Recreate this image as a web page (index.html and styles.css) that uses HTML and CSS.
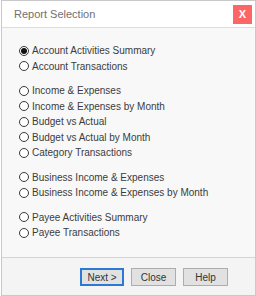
FILE: index.html
```html
<!DOCTYPE html>
<html lang="en">
  <head>
    <meta charset="UTF-8" />
    <meta name="viewport" content="width=device-width, initial-scale=1.0" />
    <title>Report Selection</title>
    <link rel="stylesheet" href="styles.css">
  </head>
  <body>
    <main class="dialog">
      <header class="titlebar">
        <h1>Report Selection</h1>
        <button class="luk">X</button>
      </header>

      <section class="indhold">
        <div class="gruppe">
          <label class="valg"><input type="radio" name="rapport" checked /> Account Activities Summary</label>
          <label class="valg"><input type="radio" name="rapport" /> Account Transactions</label>
        </div>
        <div class="gruppe">
          <label class="valg"><input type="radio" name="rapport" /> Income &amp; Expenses</label>
          <label class="valg"><input type="radio" name="rapport" /> Income &amp; Expenses by Month</label>
          <label class="valg"><input type="radio" name="rapport" /> Budget vs Actual</label>
          <label class="valg"><input type="radio" name="rapport" /> Budget vs Actual by Month</label>
          <label class="valg"><input type="radio" name="rapport" /> Category Transactions</label>
        </div>
        <div class="gruppe">
          <label class="valg"><input type="radio" name="rapport" /> Business Income &amp; Expenses</label>
          <label class="valg"><input type="radio" name="rapport" /> Business Income &amp; Expenses by Month</label>
        </div>
        <div class="gruppe">
          <label class="valg"><input type="radio" name="rapport" /> Payee Activities Summary</label>
          <label class="valg"><input type="radio" name="rapport" /> Payee Transactions</label>
        </div>
      </section>

      <footer class="knapper">
        <button class="knap fokus">Next &gt;</button>
        <button class="knap">Close</button>
        <button class="knap">Help</button>
      </footer>
    </main>
  </body>
</html>
```

FILE: styles.css
```css
body {
  margin: 0;
  background-color: white;
  font-family: "Liberation Sans", Arial, sans-serif;
}

.dialog {
  box-sizing: border-box;
  width: 255px;
  height: 296px;
  margin-left: 1px;
  border: 1px solid #c9c9c9;
  display: flex;
  flex-direction: column;
}

.titlebar {
  height: 26px;
  border-bottom: 1px solid #dcdcdc;
  background-color: white;
  display: flex;
  align-items: center;
  justify-content: space-between;
  padding: 0 3px 0 12px;
}

.titlebar h1 {
  margin: 0;
  font-size: 11px;
  font-weight: normal;
  color: #707070;
}

.luk {
  width: 19px;
  height: 19px;
  border: none;
  padding: 0;
  background-color: #fe6666;
  color: white;
  font-family: "Liberation Sans", Arial, sans-serif;
  font-size: 11px;
  font-weight: bold;
}

.indhold {
  flex: 1;
  background-color: #f8f8f8;
  padding: 15px 0 0 17px;
  display: flex;
  flex-direction: column;
  gap: 9px;
}

.gruppe {
  display: flex;
  flex-direction: column;
}

.valg {
  height: 15.5px;
  display: flex;
  align-items: center;
  font-size: 10px;
  color: #3c3c3c;
}

.valg input {
  appearance: none;
  box-sizing: border-box;
  width: 10px;
  height: 10px;
  margin: 0 3px 0 0;
  border: 1px solid #3a3a3a;
  border-radius: 50%;
  background-color: white;
  display: grid;
  place-content: center;
}

.valg input:checked::before {
  content: "";
  width: 6px;
  height: 6px;
  border-radius: 50%;
  background-color: #111;
}

.knapper {
  height: 38px;
  border-top: 1px solid #d4d4d4;
  background-color: #f4f4f4;
  display: flex;
  justify-content: flex-end;
  gap: 7px;
  padding: 10px 27px 0 0;
  box-sizing: border-box;
}

.knap {
  box-sizing: border-box;
  width: 45px;
  height: 18px;
  padding: 0;
  border: 1px solid #adadad;
  background-color: #e1e1e1;
  font-family: "Liberation Sans", Arial, sans-serif;
  font-size: 10px;
  color: #333;
}

.fokus {
  width: 44px;
  border-color: #2a7ad5;
  box-shadow: inset 0 0 0 1px #2a7ad5;
}
```
